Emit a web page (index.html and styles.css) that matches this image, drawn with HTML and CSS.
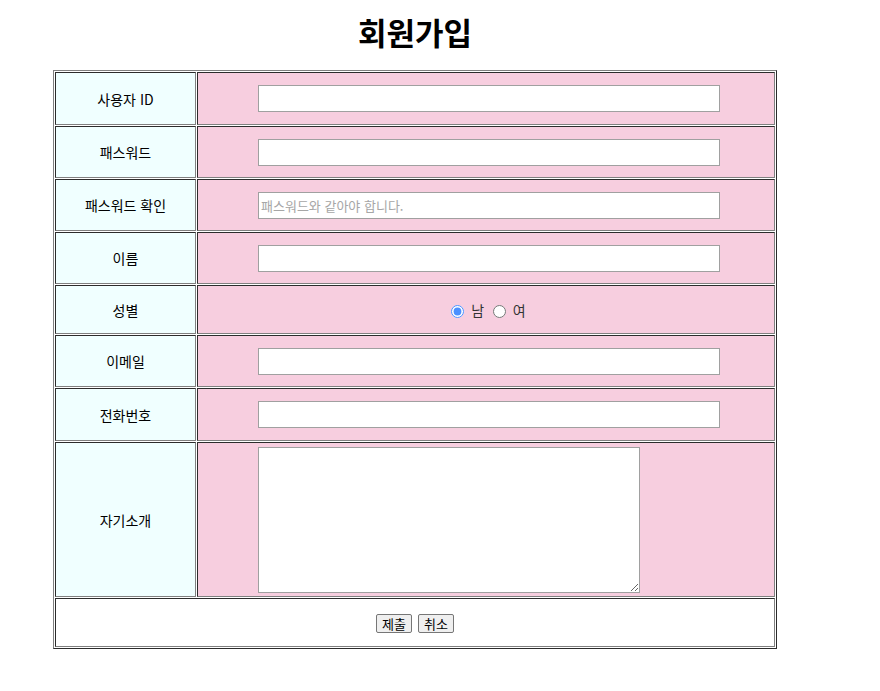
FILE: index.html
```html
<!DOCTYPE html>
<html lang="ko">
<head>
<meta charset="utf-8">
<title>회원가입</title>
<link rel="stylesheet" href="styles.css">
</head>
<body>
<div class="page">
  <h1 class="title">회원가입</h1>
  <form class="signup">
    <table class="form-table">
      <tr class="row">
        <td class="label">사용자 ID</td>
        <td class="field"><input class="text" type="text"></td>
      </tr>
      <tr class="row">
        <td class="label">패스워드</td>
        <td class="field"><input class="text" type="password"></td>
      </tr>
      <tr class="row">
        <td class="label">패스워드 확인</td>
        <td class="field"><input class="text" type="password" placeholder="패스워드와 같아야 합니다."></td>
      </tr>
      <tr class="row">
        <td class="label">이름</td>
        <td class="field"><input class="text" type="text"></td>
      </tr>
      <tr class="row row-gender">
        <td class="label">성별</td>
        <td class="field field-center">
          <label class="radio"><input type="radio" name="gender" checked> 남</label>
          <label class="radio"><input type="radio" name="gender"> 여</label>
        </td>
      </tr>
      <tr class="row">
        <td class="label">이메일</td>
        <td class="field"><input class="text" type="email"></td>
      </tr>
      <tr class="row row-tall">
        <td class="label">전화번호</td>
        <td class="field"><input class="text" type="tel"></td>
      </tr>
      <tr class="row row-intro">
        <td class="label">자기소개</td>
        <td class="field"><textarea class="area"></textarea></td>
      </tr>
      <tr class="row row-buttons">
        <td class="buttons" colspan="2">
          <button class="btn" type="submit">제출</button>
          <button class="btn" type="reset">취소</button>
        </td>
      </tr>
    </table>
  </form>
</div>
</body>
</html>
```

FILE: styles.css
```css
html, body {
  margin: 0;
  padding: 0;
  background: #ffffff;
}

body {
  font-family: "Noto Sans CJK KR", "Noto Sans", sans-serif;
  font-size: 14px;
  color: #000000;
}

.page {
  width: 724px;
  margin-left: 53px;
  padding-top: 12px;
}

.title {
  margin: 0 0 18px 0;
  height: 40px;
  line-height: 40px;
  font-size: 31px;
  font-weight: 700;
  text-align: center;
}

.signup {
  margin: 0;
}

.form-table {
  width: 724px;
  border: 1px outset #808080;
  border-spacing: 1px;
  border-collapse: separate;
  table-layout: fixed;
}

.form-table td {
  border: 1px inset #808080;
  padding: 0;
  box-sizing: border-box;
  vertical-align: middle;
}

.row td { height: 52px; }
.row:first-child td { height: 53px; }
.row-tall td { height: 53px; }
.row-gender td { height: 49px; }
.row-intro td { height: 155px; }
.row-buttons td { height: 49px; }

.label {
  width: 141px;
  background: #f0ffff;
  text-align: center;
  line-height: 20px;
}

.field {
  background: #f7cedf;
  padding-left: 60px !important;
  text-align: left;
}

.field-center {
  padding-left: 0 !important;
  text-align: center;
}

.text {
  display: block;
  box-sizing: border-box;
  width: 462px;
  height: 27px;
  margin: 0;
  padding: 2px 2px;
  border: 1px solid #a0a0a0;
  background: #ffffff;
  font-family: "Noto Sans CJK KR", sans-serif;
  font-size: 13px;
}

.text::placeholder {
  color: #a6a6a6;
}

.radio {
  color: #333333;
  font-size: 14px;
}

.radio input {
  margin: 0 3px 0 5px;
  vertical-align: -2px;
  accent-color: #4a90ff;
}

.area {
  display: block;
  box-sizing: border-box;
  width: 382px;
  height: 146px;
  margin: 0;
  border: 1px solid #a0a0a0;
  background: #ffffff;
  resize: both;
}

.buttons {
  background: #ffffff;
  text-align: center;
}

.btn {
  font-family: "Noto Sans CJK KR", sans-serif;
  font-size: 13px;
  line-height: 15px;
  padding: 1px 5px;
  margin: 0 1px;
  border: 1px solid #767676;
  border-radius: 2px;
  background: #efefef;
  color: #000000;
}
```
